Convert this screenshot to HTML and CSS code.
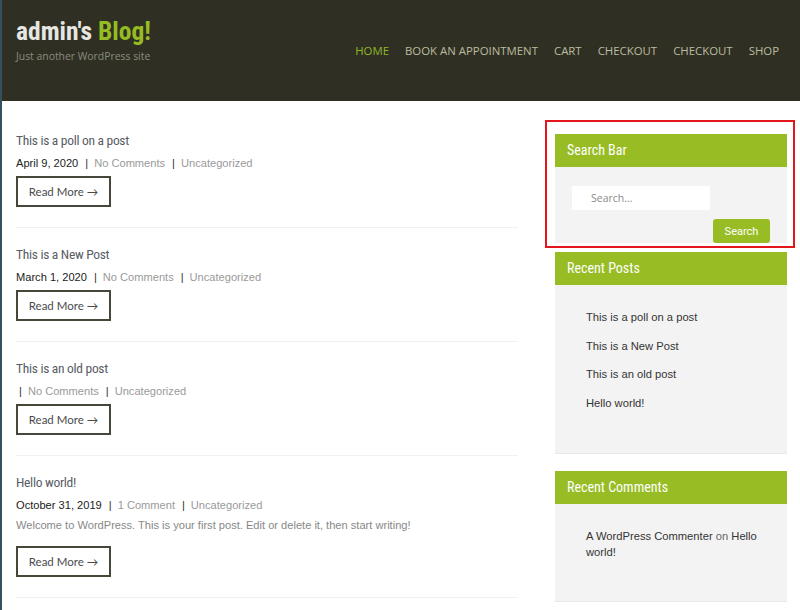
FILE: index.html
```html
<!DOCTYPE html>
<html lang="en">
<head>
    <meta charset="UTF-8">
    <meta name="viewport" content="width=device-width, initial-scale=1.0">
    <title>admin's Blog!</title>
    <link rel="stylesheet" href="styles.css">
</head>
<body>
    <header class="site-header">
        <div class="branding">
            <div class="site-title">admin's <span>Blog!</span></div>
            <div class="tagline">Just another WordPress site</div>
        </div>
        <nav class="main-nav">
            <a href="#" class="current">HOME</a>
            <a href="#">BOOK AN APPOINTMENT</a>
            <a href="#">CART</a>
            <a href="#">CHECKOUT</a>
            <a href="#">CHECKOUT</a>
            <a href="#">SHOP</a>
        </nav>
    </header>

    <div class="page">
        <main class="posts">
            <article class="post">
                <h2 class="post-title">This is a poll on a post</h2>
                <div class="meta"><span class="date">April 9, 2020</span><span class="sep">|</span><a href="#">No Comments</a><span class="sep">|</span><a href="#">Uncategorized</a></div>
                <a href="#" class="read-more">Read More &rarr;</a>
            </article>
            <article class="post">
                <h2 class="post-title">This is a New Post</h2>
                <div class="meta"><span class="date">March 1, 2020</span><span class="sep">|</span><a href="#">No Comments</a><span class="sep">|</span><a href="#">Uncategorized</a></div>
                <a href="#" class="read-more">Read More &rarr;</a>
            </article>
            <article class="post">
                <h2 class="post-title">This is an old post</h2>
                <div class="meta"><span class="sep first">|</span><a href="#">No Comments</a><span class="sep">|</span><a href="#">Uncategorized</a></div>
                <a href="#" class="read-more">Read More &rarr;</a>
            </article>
            <article class="post">
                <h2 class="post-title">Hello world!</h2>
                <div class="meta"><span class="date">October 31, 2019</span><span class="sep">|</span><a href="#">1 Comment</a><span class="sep">|</span><a href="#">Uncategorized</a></div>
                <p class="excerpt">Welcome to WordPress. This is your first post. Edit or delete it, then start writing!</p>
                <a href="#" class="read-more">Read More &rarr;</a>
            </article>
        </main>

        <aside class="sidebar">
            <div class="highlight">
                <section class="widget">
                    <h3 class="widget-title">Search Bar</h3>
                    <form class="widget-body search-form">
                        <input type="text" placeholder="Search...">
                        <button type="button">Search</button>
                    </form>
                </section>
            </div>

            <section class="widget">
                <h3 class="widget-title">Recent Posts</h3>
                <ul class="widget-body link-list">
                    <li><a href="#">This is a poll on a post</a></li>
                    <li><a href="#">This is a New Post</a></li>
                    <li><a href="#">This is an old post</a></li>
                    <li><a href="#">Hello world!</a></li>
                </ul>
            </section>

            <section class="widget">
                <h3 class="widget-title">Recent Comments</h3>
                <p class="widget-body comments"><a href="#">A WordPress Commenter</a> <span class="on">on</span> <a href="#">Hello world!</a></p>
            </section>
        </aside>
    </div>
</body>
</html>
```

FILE: styles.css
```css
body { margin: 0; border-left: 2px solid #35505e; font-family: "Liberation Sans", Arial, sans-serif; background: #fff; min-height: 610px; }
a { text-decoration: none; }

.site-header { height: 101px; background: #2f3023; display: flex; justify-content: space-between; padding: 0 21px 0 14px; }
.branding { padding-top: 16px; }
.site-title { font-family: "Roboto Condensed", "Liberation Sans Narrow", "DejaVu Sans Condensed", Roboto, sans-serif; font-weight: bold; font-size: 25.5px; color: #e6e6e2; line-height: 30px; }
.site-title span { color: #97bb22; }
.tagline { font-family: "Open Sans", sans-serif; font-size: 10.4px; color: #8c8c80; margin-top: 3px; }

.main-nav { display: flex; gap: 16px; padding-top: 43px; }
.main-nav a { font-family: "Open Sans", sans-serif; font-size: 11.4px; color: #bcbb9f; line-height: 16px; }
.main-nav a.current { color: #8db52a; }

.page { display: flex; justify-content: space-between; padding: 0 5px 0 14px; }

.posts { width: 502px; padding-top: 13px; }
.post { padding: 16px 0 20px; border-bottom: 1px solid #f1f1f1; }
.post-title { margin: 0 0 3px; font-family: "Roboto Condensed", "Liberation Sans Narrow", "DejaVu Sans Condensed", Roboto, sans-serif; font-weight: normal; font-size: 13.5px; letter-spacing: -0.3px; line-height: 20px; color: #585c66; }
.meta { font-size: 11.1px; line-height: 20px; color: #999; }
.meta .date { color: #222; }
.meta a { color: #9a9a9a; }
.meta .sep { color: #333; margin: 0 6px 0 7px; }
.meta .sep.first { margin-left: 3px; }
.excerpt { margin: 0 0 11px; font-size: 11.1px; line-height: 20px; color: #888; }
.read-more { display: inline-block; margin-top: 3px; width: 91px; height: 27px; line-height: 27px; border: 2px solid #46463a; text-align: center; font-family: Lato, sans-serif; font-size: 11.5px; color: #4a4a4a; }
.excerpt + .read-more { margin-top: 0; }

.sidebar { width: 250px; padding-top: 19px; }
.highlight { border: 2px solid #e3161c; padding: 12px 6px 11px 8px; margin-bottom: 4px; }
.sidebar > .widget { margin-left: 10px; margin-bottom: 17px; width: 232px; }
.widget-title { margin: 0; height: 33px; line-height: 33px; padding-left: 12px; background: #98bc24; color: #fff; font-family: "Roboto Condensed", "Liberation Sans Narrow", "DejaVu Sans Condensed", Roboto, sans-serif; font-weight: normal; font-size: 14px; }
.widget-body { margin: 0; background: #f4f3f3; border-bottom: 1px solid #e8e8e8; }

.search-form { padding: 19px 17px 0; border-bottom: none; }
.search-form input { display: block; width: 138px; height: 24px; box-sizing: border-box; border: none; padding-left: 19px; font-family: "Open Sans", sans-serif; font-size: 10.5px; background: #fff; }
.search-form input::placeholder { color: #8a8a8a; }
.search-form button { display: block; width: 57px; height: 24px; margin: 9px 0 -8px auto; border: none; border-radius: 3px; background: #98bc24; color: #fff; font-family: Roboto, sans-serif; font-size: 11px; position: relative; }

.link-list { list-style: none; padding: 18px 20px 35px 31px; }
.link-list li { font-size: 11.2px; line-height: 28.7px; }
.link-list a { color: #333; }

.comments { padding: 24px 20px 41px 31px; font-size: 11.2px; line-height: 16px; }
.comments a { color: #333; }
.comments .on { color: #666; }
```
